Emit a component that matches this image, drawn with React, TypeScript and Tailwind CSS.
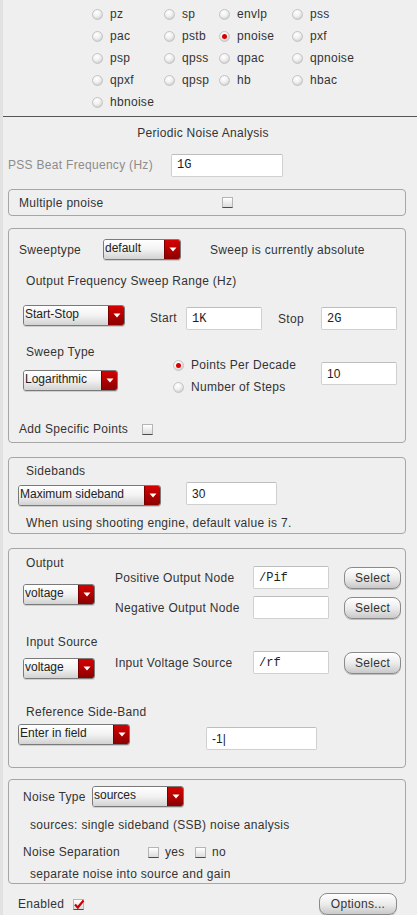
import React from "react";

const font = "font-['Liberation_Sans','Helvetica',sans-serif]";

const Radio = ({ checked = false }: { checked?: boolean }) => (
    <span className="relative inline-flex h-[11px] w-[11px] shrink-0 items-center justify-center rounded-full border border-[#c4c4c4] bg-[radial-gradient(circle_at_40%_30%,#ffffff_0%,#f0f0f0_45%,#bdbdbd_100%)]">
        {checked && <span className="h-[5px] w-[5px] rounded-full bg-[#d40000]" />}
    </span>
);

const RadioItem = ({ label, checked }: { label: string; checked?: boolean }) => (
    <div className="flex h-[22px] items-center gap-[7px]">
        <Radio checked={checked} />
        <span>{label}</span>
    </div>
);

const Check = ({ checked = false }: { checked?: boolean }) => (
    <span className="relative inline-block h-[11px] w-[11px] shrink-0 border border-[#b5b5b5] border-b-[#4a4a4a] bg-gradient-to-b from-white to-[#dcdcdc]">
        {checked && (
            <svg viewBox="0 0 12 12" className="absolute left-[-1px] top-[-2px] h-[12px] w-[12px]">
                <path d="M2 6.5 L4.8 9.5 L10.5 2.5" fill="none" stroke="#d10000" strokeWidth="2.2" />
            </svg>
        )}
    </span>
);

const Dropdown = ({ label, w }: { label: string; w: string }) => (
    <div className={`flex h-[21px] ${w} shrink-0 overflow-hidden rounded-[3px] border border-[#7a7a7a] shadow-[0_1px_0_#cfcfcf]`}>
        <div className="flex-1 bg-gradient-to-b from-white via-[#f2f2f2] to-[#d2d2d2] pl-[1px] leading-[16px] tracking-normal text-[#222]">{label}</div>
        <div className="flex w-[16px] items-center justify-center border-l border-[#7a0000] bg-gradient-to-b from-[#d80000] to-[#8c0000]">
            <svg viewBox="0 0 8 5" className="h-[5px] w-[8px]">
                <path d="M0.5 0.5 H7.5 L4 4.5 Z" fill="#ffffff" />
            </svg>
        </div>
    </div>
);

const Field = ({ value = "", w, mono = false, cls = "" }: { value?: string; w: string; mono?: boolean; cls?: string }) => (
    <div
        className={`flex h-[23px] ${w} shrink-0 items-center rounded-[2px] border border-[#d0d0d0] border-t-[#bdbdbd] bg-white pl-[5px] tracking-normal text-[#222] ${
            mono ? "font-['Liberation_Mono',monospace] text-[12px]" : ""
        } ${cls}`}
    >
        {value}
    </div>
);

const Btn = ({ label, w }: { label: string; w: string }) => (
    <div className={`flex h-[22px] ${w} shrink-0 items-center justify-center rounded-[8px] border border-[#8a8a8a] bg-gradient-to-b from-white via-[#ececec] to-[#c9c9c9] text-[#333] shadow-[0_1px_0_#bdbdbd]`}>
        {label}
    </div>
);

const Box = ({ h, mt, children }: { h: string; mt: string; children: React.ReactNode }) => (
    <div className={`${h} ${mt} rounded-[4px] border border-[#a6a6a6]`}>{children}</div>
);

export default function App() {
    return (
        <div className={`flex h-[915px] w-full overflow-hidden bg-[#efefef] text-[12px] tracking-[0.3px] text-[#333] ${font}`}>
            <div className="w-[3px] shrink-0 bg-[#e2e2e2]" />
            <div className="flex-1">
                {/* analysis types */}
                <div className="grid grid-cols-[72px_55px_73px_auto] pl-[89px] pt-[3px]">
                    <RadioItem label="pz" />
                    <RadioItem label="sp" />
                    <RadioItem label="envlp" />
                    <RadioItem label="pss" />
                    <RadioItem label="pac" />
                    <RadioItem label="pstb" />
                    <RadioItem label="pnoise" checked />
                    <RadioItem label="pxf" />
                    <RadioItem label="psp" />
                    <RadioItem label="qpss" />
                    <RadioItem label="qpac" />
                    <RadioItem label="qpnoise" />
                    <RadioItem label="qpxf" />
                    <RadioItem label="qpsp" />
                    <RadioItem label="hb" />
                    <RadioItem label="hbac" />
                    <RadioItem label="hbnoise" />
                </div>
                <div className="mt-[3px] h-px bg-[#555]" />

                <div className="mt-[8px] h-[16px] pr-[14px] text-center leading-[16px]">Periodic Noise Analysis</div>

                <div className="mt-[13px] flex h-[22px] items-center pl-[5px]">
                    <span className="w-[163px] text-[#8c8c8c]">PSS Beat Frequency (Hz)</span>
                    <Field value="1G" w="w-[112px]" mono cls="h-[22px] border-[#c8c8c8] bg-[#f3f3f3] text-[11px]" />
                </div>

                <div className="pl-[5px] pr-[11px]">
                    <Box h="h-[27px]" mt="mt-[13px]">
                        <div className="flex h-full items-center pl-[10px]">
                            <span className="w-[203px]">Multiple pnoise</span>
                            <Check />
                        </div>
                    </Box>

                    {/* sweep */}
                    <Box h="h-[215px]" mt="mt-[12px]">
                        <div className="pl-[10px]">
                            <div className="mt-[10px] flex h-[21px] items-center">
                                <span className="w-[84px]">Sweeptype</span>
                                <Dropdown label="default" w="w-[78px]" />
                                <span className="ml-[29px]">Sweep is currently absolute</span>
                            </div>
                            <div className="mt-[14px] h-[14px] pl-[7px] leading-[14px]">Output Frequency Sweep Range (Hz)</div>
                            <div className="mt-[17px] flex h-[25px] items-start pl-[4px]">
                                <Dropdown label="Start-Stop" w="w-[102px]" />
                                <span className="ml-[25px] mt-[4px] w-[36px]">Start</span>
                                <Field value="1K" w="w-[76px]" mono cls="mt-[2px]" />
                                <span className="ml-[16px] mt-[5px] w-[43px]">Stop</span>
                                <Field value="2G" w="w-[76px]" mono cls="mt-[2px]" />
                            </div>
                            <div className="flex">
                                <div className="w-[154px] pl-[4px]">
                                    <div className="mt-[15px] h-[14px] pl-[3px] leading-[14px]">Sweep Type</div>
                                    <div className="mt-[11px]">
                                        <Dropdown label="Logarithmic" w="w-[95px]" />
                                    </div>
                                </div>
                                <div className="mt-[24px] w-[148px]">
                                    <RadioItem label="Points Per Decade" checked />
                                    <RadioItem label="Number of Steps" />
                                </div>
                                <Field value="10" w="w-[76px]" cls="mt-[32px] h-[22px]" />
                            </div>
                            <div className="mt-[24px] flex h-[14px] items-center">
                                <span className="w-[123px]">Add Specific Points</span>
                                <Check />
                            </div>
                        </div>
                    </Box>

                    {/* sidebands */}
                    <Box h="h-[77px]" mt="mt-[14px]">
                        <div className="pl-[9px]">
                            <div className="mt-[6px] h-[14px] pl-[8px] leading-[14px]">Sidebands</div>
                            <div className="mt-[4px] flex items-start">
                                <div className="mt-[3px]">
                                    <Dropdown label="Maximum sideband" w="w-[143px]" />
                                </div>
                                <Field value="30" w="w-[91px]" cls="ml-[25px]" />
                            </div>
                            <div className="mt-[10px] h-[14px] pl-[8px] leading-[14px]">When using shooting engine, default value is 7.</div>
                        </div>
                    </Box>

                    {/* output */}
                    <Box h="h-[220px]" mt="mt-[14px]">
                        <div className="pl-[14px]">
                            <div className="flex">
                                <div className="w-[92px]">
                                    <div className="mt-[7px] h-[14px] pl-[3px] leading-[14px]">Output</div>
                                    <div className="mt-[14px]">
                                        <Dropdown label="voltage" w="w-[72px]" />
                                    </div>
                                </div>
                                <div className="mt-[17px] flex flex-col gap-[7px]">
                                    <div className="flex items-center">
                                        <span className="w-[138px]">Positive Output Node</span>
                                        <Field value="/Pif" w="w-[76px]" mono />
                                        <div className="ml-[15px]">
                                            <Btn label="Select" w="w-[57px]" />
                                        </div>
                                    </div>
                                    <div className="flex items-center">
                                        <span className="w-[138px]">Negative Output Node</span>
                                        <Field w="w-[76px]" />
                                        <div className="ml-[15px]">
                                            <Btn label="Select" w="w-[57px]" />
                                        </div>
                                    </div>
                                </div>
                            </div>
                            <div className="flex">
                                <div className="w-[92px]">
                                    <div className="mt-[16px] h-[14px] pl-[3px] leading-[14px]">Input Source</div>
                                    <div className="mt-[9px]">
                                        <Dropdown label="voltage" w="w-[72px]" />
                                    </div>
                                </div>
                                <div className="mt-[27px] flex items-center">
                                    <span className="w-[138px]">Input Voltage Source</span>
                                    <Field value="/rf" w="w-[76px]" mono />
                                    <div className="ml-[15px]">
                                        <Btn label="Select" w="w-[57px]" />
                                    </div>
                                </div>
                            </div>
                        </div>
                        <div className="pl-[9px]">
                            <div className="mt-[26px] h-[14px] pl-[8px] leading-[14px]">Reference Side-Band</div>
                            <div className="mt-[5px] flex items-start">
                                <Dropdown label="Enter in field" w="w-[112px]" />
                                <Field value="-1|" w="w-[111px]" cls="ml-[76px] mt-[3px]" />
                            </div>
                        </div>
                    </Box>

                    {/* noise */}
                    <Box h="h-[105px]" mt="mt-[11px]">
                        <div className="pl-[14px]">
                            <div className="mt-[6px] flex h-[21px] items-center">
                                <span className="w-[69px]">Noise Type</span>
                                <Dropdown label="sources" w="w-[92px]" />
                            </div>
                            <div className="mt-[11px] h-[14px] pl-[7px] leading-[14px]">sources: single sideband (SSB) noise analysis</div>
                            <div className="mt-[13px] flex h-[14px] items-center">
                                <span className="w-[125px]">Noise Separation</span>
                                <Check />
                                <span className="ml-[6px] w-[30px]">yes</span>
                                <Check />
                                <span className="ml-[6px]">no</span>
                            </div>
                            <div className="mt-[8px] h-[14px] pl-[7px] leading-[14px]">separate noise into source and gain</div>
                        </div>
                    </Box>

                    <div className="mt-[9px] flex h-[22px] items-center">
                        <span className="ml-[10px] w-[55px]">Enabled</span>
                        <Check checked />
                        <div className="ml-auto mr-[9px]">
                            <Btn label="Options..." w="w-[78px]" />
                        </div>
                    </div>
                </div>
            </div>
        </div>
    );
}
